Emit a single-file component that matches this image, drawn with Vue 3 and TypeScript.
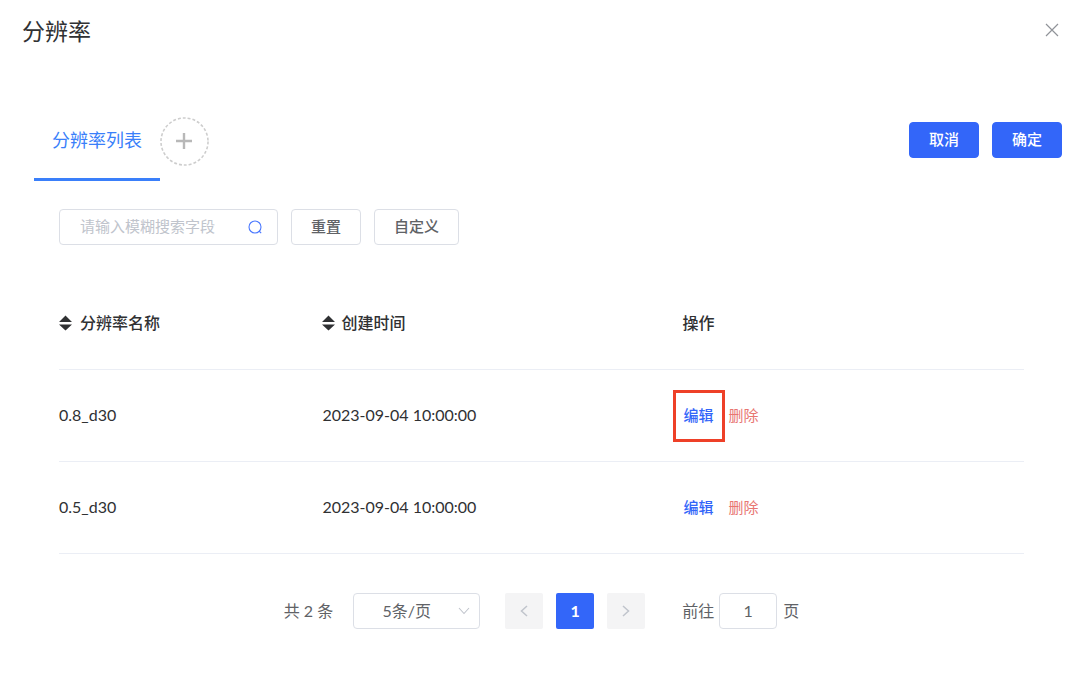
<script setup lang="ts">
import { ref } from 'vue'

interface Resolution {
  name: string
  created: string
  marked: boolean
}

const rows = ref<Resolution[]>([
  { name: '0.8_d30', created: '2023-09-04 10:00:00', marked: true },
  { name: '0.5_d30', created: '2023-09-04 10:00:00', marked: false },
])
const keyword = ref('')
const pageSize = ref('5')
const page = ref('1')
</script>

<template>
  <main class="dialog">
    <header class="head">
      <h1>分辨率</h1>
      <button class="close" type="button" aria-label="关闭">
        <svg width="14" height="14" viewBox="0 0 14 14" fill="none" stroke="#909399" stroke-width="1.2">
          <path d="M1 1L13 13M13 1L1 13" />
        </svg>
      </button>
    </header>

    <div class="bar">
      <nav class="tabs">
        <button class="tab" type="button">分辨率列表</button>
        <button class="add" type="button" aria-label="新增">
          <svg class="ring" viewBox="0 0 50 50" fill="none" stroke="#cdcdcd" stroke-width="1.6">
            <circle cx="25" cy="25" r="24" stroke-dasharray="3 2.026" />
          </svg>
          <svg class="plus" width="17" height="17" viewBox="0 0 17 17" fill="none" stroke="#b8b8b8" stroke-width="2.4">
            <path d="M8 0V16M0 8H16" />
          </svg>
        </button>
      </nav>
      <div class="confirm">
        <button class="btn primary" type="button">取消</button>
        <button class="btn primary" type="button">确定</button>
      </div>
    </div>

    <section class="content">
      <form class="filters" @submit.prevent>
        <div class="search">
          <input v-model="keyword" type="text" aria-label="模糊搜索" placeholder="请输入模糊搜索字段" />
          <button class="lens" type="submit" aria-label="搜索">
            <svg width="14" height="14" viewBox="0 0 14 14" fill="none" stroke="#4a78ff" stroke-width="1.1">
              <circle cx="7" cy="7" r="6" />
              <path d="M11 11L13.2 13.2" />
            </svg>
          </button>
        </div>
        <button class="btn" type="reset">重置</button>
        <button class="btn" type="button">自定义</button>
      </form>

      <table>
        <colgroup>
          <col class="c-name" />
          <col class="c-time" />
          <col />
        </colgroup>
        <thead>
          <tr>
            <th scope="col">
              <button class="sort first" type="button">
                <svg width="13" height="16" viewBox="0 0 13 16" fill="#303133">
                  <path d="M6.5 0.6L13 7H0ZM0 9.4H13L6.5 15.6Z" />
                </svg>
                分辨率名称
              </button>
            </th>
            <th scope="col">
              <button class="sort" type="button">
                <svg width="13" height="16" viewBox="0 0 13 16" fill="#303133">
                  <path d="M6.5 0.6L13 7H0ZM0 9.4H13L6.5 15.6Z" />
                </svg>
                创建时间
              </button>
            </th>
            <th scope="col">操作</th>
          </tr>
        </thead>
        <tbody>
          <tr v-for="row in rows" :key="row.name">
            <td>{{ row.name }}</td>
            <td>{{ row.created }}</td>
            <td>
              <div class="actions">
                <a href="#" class="edit" :class="{ marked: row.marked }">编辑</a>
                <a href="#" class="delete">删除</a>
              </div>
            </td>
          </tr>
        </tbody>
      </table>

      <footer class="pager">
        <span class="total">共 2 条</span>
        <div class="size">
          <select v-model="pageSize" aria-label="每页条数">
            <option value="5">5条/页</option>
            <option value="10">10条/页</option>
          </select>
          <svg width="12" height="8" viewBox="0 0 12 8" fill="none" stroke="#c0c4cc" stroke-width="1.1">
            <path d="M1 1L6 6.5L11 1" />
          </svg>
        </div>
        <div class="pages">
          <button type="button" disabled aria-label="上一页">
            <svg width="8" height="12" viewBox="0 0 8 12" fill="none" stroke="#c0c4cc" stroke-width="1.5">
              <path d="M7 1L1.5 6L7 11" />
            </svg>
          </button>
          <button class="current" type="button">1</button>
          <button type="button" disabled aria-label="下一页">
            <svg width="8" height="12" viewBox="0 0 8 12" fill="none" stroke="#c0c4cc" stroke-width="1.5">
              <path d="M1 1L6.5 6L1 11" />
            </svg>
          </button>
        </div>
        <label class="jump">前往<input v-model="page" type="text" />页</label>
      </footer>
    </section>
  </main>
</template>

<style>
body {
  background: #fff;
}
</style>

<style scoped>
.dialog,
.dialog button,
.dialog input,
.dialog select {
  font-family: Lato, 'Noto Sans CJK SC', sans-serif;
}
.dialog {
  box-sizing: border-box;
  padding: 15px 18px 46px 22px;
  color: #303133;
  font-size: 16px;
  line-height: 24px;
}
.dialog *,
.dialog *::after {
  box-sizing: border-box;
}
button {
  padding: 0;
  border: 0;
  background: none;
  color: inherit;
  cursor: pointer;
}
svg {
  display: block;
}
.head {
  display: flex;
  justify-content: space-between;
  align-items: flex-start;
}
h1 {
  margin: 0;
  font-size: 23px;
  line-height: 32px;
  font-weight: 400;
}
.close {
  padding: 8px 3px;
}
.bar {
  display: flex;
  justify-content: space-between;
  align-items: flex-start;
  margin-top: 54px;
  padding-left: 12px;
}
.tabs {
  display: flex;
  align-items: center;
}
.tab {
  height: 80px;
  padding: 0 18px;
  border-bottom: 3px solid #3a7ffa;
  color: #3a7ffa;
  font-size: 18px;
  line-height: 24px;
}
.add {
  display: grid;
  place-items: center;
  width: 49px;
  height: 49px;
}
.add svg {
  grid-area: 1 / 1;
}
.ring {
  width: 49px;
  height: 49px;
}
.confirm {
  display: flex;
  gap: 13px;
  padding-top: 21px;
}
.btn {
  height: 36px;
  padding: 0 19px 2px;
  border: 1px solid #dcdfe6;
  border-radius: 4px;
  background: #fff;
  color: #606266;
  font-size: 15px;
  line-height: 32px;
  font-weight: 500;
}
.btn.primary {
  border-color: #3366f9;
  background: #3366f9;
  color: #fff;
}
.content {
  padding: 28px 38px 0 37px;
}
.filters {
  display: flex;
  gap: 13px;
}
.search {
  display: flex;
  align-items: center;
  width: 219px;
  height: 36px;
  padding: 0 15px 0 20px;
  border: 1px solid #dcdfe6;
  border-radius: 4px;
}
.search input {
  flex: 1;
  min-width: 0;
  height: 32px;
  padding: 0 0 2px;
  border: 0;
  outline: 0;
  background: none;
  color: #606266;
  font-size: 15px;
}
input::placeholder {
  color: #c0c4cc;
  opacity: 1;
}
table {
  width: 100%;
  margin-top: 33px;
  border-collapse: separate;
  border-spacing: 0;
  table-layout: fixed;
}
.c-name {
  width: 27.3%;
}
.c-time {
  width: 37.3%;
}
th,
td {
  height: 92px;
  padding: 0 0 2px;
  border-bottom: 1px solid #ebeef5;
  text-align: left;
}
th {
  font-weight: 500;
}
.sort {
  display: flex;
  align-items: center;
  gap: 6px;
  font-size: 16px;
  line-height: 24px;
  font-weight: 500;
}
.sort.first {
  gap: 8px;
}
.actions {
  display: flex;
  gap: 15px;
  padding-left: 1px;
  font-size: 15px;
}
.actions a {
  text-decoration: none;
}
.edit {
  position: relative;
  color: #3366f9;
  font-weight: 500;
}
.delete {
  color: #e87672;
}
.marked::after {
  content: '';
  position: absolute;
  inset: -13px -12px -15px -10px;
  border: 3px solid #ee4028;
}
.pager {
  display: flex;
  justify-content: center;
  align-items: center;
  margin-top: 39px;
  color: #606266;
}
.size {
  display: grid;
  align-items: center;
  width: 127px;
  margin-left: 20px;
}
.size > * {
  grid-area: 1 / 1;
}
.size svg {
  justify-self: end;
  margin-right: 10px;
  pointer-events: none;
}
select {
  width: 100%;
  height: 36px;
  padding: 0 28px 2px 8px;
  border: 1px solid #dcdfe6;
  border-radius: 4px;
  appearance: none;
  background: #fff;
  color: #606266;
  font-size: 16px;
  text-align: center;
  text-align-last: center;
}
.pages {
  display: flex;
  gap: 13px;
  margin-left: 25px;
}
.pages button {
  display: grid;
  place-items: center;
  width: 38px;
  height: 36px;
  border-radius: 2px;
  background: #f4f4f5;
}
.pages .current {
  padding-bottom: 2px;
  background: #3366f9;
  color: #fff;
  font-size: 16px;
  font-weight: 700;
}
.jump {
  display: flex;
  align-items: center;
  margin-left: 37px;
}
.jump input {
  width: 58px;
  height: 36px;
  margin: 0 6px 0 5px;
  padding: 0 0 2px;
  border: 1px solid #dcdfe6;
  border-radius: 4px;
  color: #606266;
  font-size: 16px;
  text-align: center;
}
</style>
